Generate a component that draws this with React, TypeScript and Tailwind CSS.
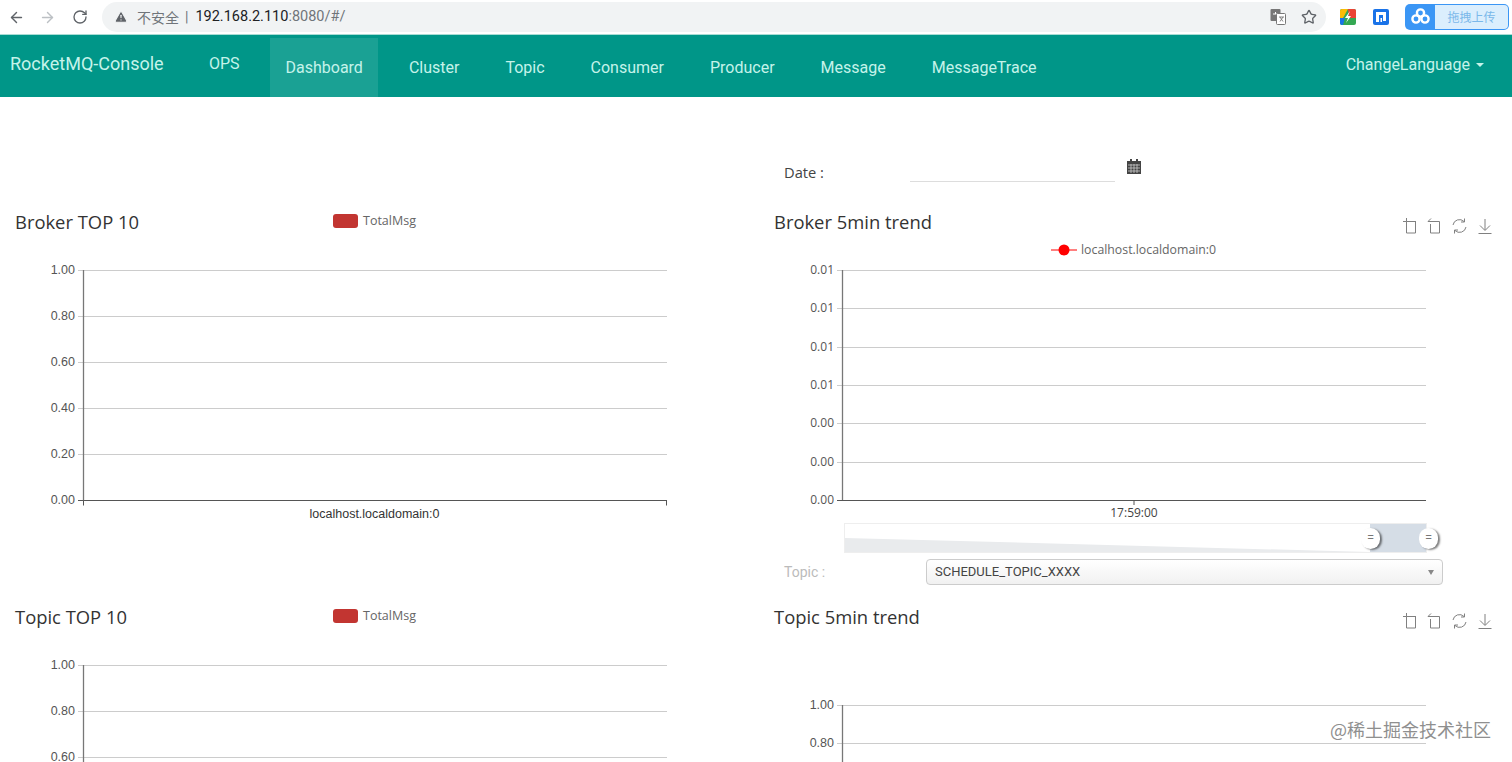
import { ArrowLeft, ArrowRight, RotateCw, Star, TriangleAlert } from "lucide-react";

const navItems = ["Cluster", "Topic", "Consumer", "Producer", "Message", "MessageTrace"];

function ToolIcons() {
  return (
    <svg width="92" height="16" viewBox="0 0 92 16" fill="none" stroke="#808080" strokeWidth="1">
      {/* zoom */}
      <path d="M6.5 0v3.5H16M6.5 3.5v11.5H15.5V3.5M3 3.5h3.5" />
      {/* zoom back */}
      <path d="M31 3.5H28l3-3M28 3.5h11.5v11.5H30.5V6" />
      {/* restore */}
      <path d="M53 7a6.5 6.5 0 0 1 11-3.5M66 9a6.5 6.5 0 0 1-11 3.5M64.5 0.5v3.5h-3.5M54.5 15.5V12h3.5" />
      {/* save */}
      <path d="M85 1v11M80 7.5l5 5 5-5M78.5 15.5h13" />
    </svg>
  );
}

type ChartProps = {
  labels: string[];
  width: number;
  height: number;
  xLabel?: string;
};

// echarts style grid: y axis on the left, one line per label
function Chart({ labels, width, height, xLabel }: ChartProps) {
  const top = 30;
  const step = 46;
  const bottom = top + step * (labels.length - 1) + 0.5;
  const axisX = 83;
  return (
    <svg width={width + 10} height={height} className="block">
      {labels.map((l, i) => {
        const y = top + i * step + 0.5;
        return (
          <g key={i}>
            <line x1={axisX - 5} x2={width} y1={y} y2={y} stroke={i === labels.length - 1 && xLabel ? "#555" : "#ccc"} />
            <text x={axisX - 8} y={y + 3} textAnchor="end" fontSize="12.5" fill="#555" fontFamily="Liberation Sans, sans-serif">
              {l}
            </text>
          </g>
        );
      })}
      <line x1={axisX + 0.5} x2={axisX + 0.5} y1={top} y2={xLabel ? bottom : height} stroke="#777" strokeWidth="1.3" />
      {xLabel && (
        <>
          <line x1={axisX + 0.5} x2={axisX + 0.5} y1={bottom} y2={bottom + 5} stroke="#555" />
          <line x1={width - 0.5} x2={width - 0.5} y1={bottom} y2={bottom + 5} stroke="#555" />
          <text x={374.5} y={bottom + 17} textAnchor="middle" fontSize="12.5" fill="#333" fontFamily="Liberation Sans, sans-serif">
            {xLabel}
          </text>
        </>
      )}
    </svg>
  );
}

function Legend() {
  return (
    <div className="flex items-center gap-[5px] text-[12.5px] leading-[14px] text-[#666] font-['Open_Sans',sans-serif]">
      <span className="w-[25px] h-[14px] rounded-[3px] bg-[#c23531]" />
      TotalMsg
    </div>
  );
}

export default function App() {
  return (
    <div className="w-[1512px] h-[762px] overflow-hidden bg-white font-['Roboto',sans-serif]">
      {/* browser bar */}
      <div className="h-[34px] flex items-center bg-white">
        <div className="w-[102px] pl-[8px] flex items-center gap-[14px]">
          <ArrowLeft size={17} className="text-[#5f6368]" />
          <ArrowRight size={17} className="text-[#bcc0c4]" />
          <RotateCw size={16} className="ml-[2px] text-[#5f6368]" />
        </div>
        <div className="w-[1224px] h-[30px] rounded-full bg-[#f1f3f4] flex items-center pl-[12px] pr-[9px]">
          <TriangleAlert size={14} fill="#5f6368" stroke="#f1f3f4" />
          <span className="ml-[9px] text-[14px] text-[#70757a] font-['Noto_Sans_CJK_SC',sans-serif]">不安全</span>
          <span className="ml-[6px] mr-[7px] text-[14px] text-[#70757a]">|</span>
          <span className="text-[14.5px] text-[#202124]">192.168.2.110</span>
          <span className="text-[14.5px] text-[#70757a]">:8080/#/</span>
          <div className="ml-auto flex items-center gap-[15px]">
            <svg width="16" height="16" viewBox="0 0 16 16">
              <rect x="0.5" y="0" width="10" height="12" rx="1" fill="#777" />
              <path d="M3 5h5M5.5 3v2" stroke="#fff" fill="none" />
              <rect x="6.5" y="4.5" width="9" height="11" rx="1" fill="#fff" stroke="#777" />
              <path d="M9 8h5M10 12.5l3-4.5M10 8l3 4.5" stroke="#777" fill="none" strokeWidth="0.9" />
            </svg>
            <Star size={16} className="text-[#5f6368]" />
          </div>
        </div>
        <div className="ml-[14px] flex items-center">
          <svg width="16" height="16" viewBox="0 0 16 16">
            <rect width="16" height="16" rx="2" fill="#34a853" />
            <path d="M0 2a2 2 0 0 1 2-2h6L3 9H0z" fill="#fbbc05" />
            <path d="M8 0h6a2 2 0 0 1 2 2v7H9z" fill="#ea4335" />
            <path d="M0 9h5l-2 7H2a2 2 0 0 1-2-2z" fill="#1a73e8" />
            <path d="M10 2L5 9h3l-2 5 5-7H8z" fill="#fff" />
          </svg>
          <svg width="16" height="16" viewBox="0 0 16 16" className="ml-[17px]">
            <rect width="16" height="16" rx="2" fill="#1a73e8" />
            <path d="M3 3h10v9h-3V6H6v7H3z" fill="#fff" />
            <rect x="7.5" y="9" width="1.5" height="4" fill="#fff" />
          </svg>
          <div className="ml-[16px] w-[104px] h-[26px] rounded-[5px] bg-[#3b96f5] flex items-center">
            <svg width="30" height="26" viewBox="0 0 30 26" fill="none" stroke="#fff" strokeWidth="2.4">
              <circle cx="11" cy="15" r="3.6" />
              <circle cx="20" cy="15" r="3.6" />
              <circle cx="15.5" cy="9" r="3.6" />
            </svg>
            <div className="flex-1 h-[24px] mr-[1px] rounded-r-[4px] bg-[#dbeefd] text-center text-[12px] leading-[24px] text-[#7ab8ea] font-['Noto_Sans_CJK_SC',sans-serif]">
              拖拽上传
            </div>
          </div>
        </div>
      </div>

      {/* nav */}
      <div className="h-[63px] bg-[#009688] flex text-[16px] text-[#c5f3ea] border-t border-[#a8dcd4]">
        <div className="w-[209px] pl-[10px] pt-[16px] text-[18px] leading-[26px]">RocketMQ-Console</div>
        <div className="w-[61px] pt-[16px] leading-[26px]">OPS</div>
        <div className="flex pt-[3px]">
          <div className="h-[59px] px-[15.5px] mr-[7.5px] flex items-center bg-white/10">Dashboard</div>
          {navItems.map((item) => (
            <div key={item} className="h-[59px] px-[23px] flex items-center">
              {item}
            </div>
          ))}
        </div>
        <div className="ml-auto pr-[28px] pt-[17px] leading-[26px] flex items-start">
          ChangeLanguage
          <span className="ml-[6px] mt-[11px] border-x-[4px] border-t-[4px] border-x-transparent border-t-[#c5f3ea]" />
        </div>
      </div>

      {/* date row */}
      <div className="h-[108px] pl-[784px] pt-[60px] flex items-start text-[14.7px] text-[#444] font-['Open_Sans',sans-serif]">
        <span className="w-[126px] pt-[4px] leading-[22px]">Date :</span>
        <div className="w-[205px] h-[25px] border-b border-[#ddd]" />
        <svg width="14" height="15" viewBox="0 0 14 15" className="ml-[12px] mt-[2px]" fill="#444">
          <rect x="3" y="0" width="2" height="3" />
          <rect x="9" y="0" width="2" height="3" />
          <path d="M0 2h14v13H0z" />
          <path d="M1 6h12M1 9h12M1 12h12M4 5v9M7 5v9M10 5v9" stroke="#ccc" strokeWidth="0.8" />
        </svg>
      </div>

      {/* charts */}
      <div className="grid grid-cols-[774px_738px]">
        <div className="h-[395px]">
          <div className="h-[35px] flex items-start">
            <h3 className="w-[333px] pl-[15px] text-[18.4px] leading-[33px] text-[#333] font-['Open_Sans',sans-serif]">Broker TOP 10</h3>
            <div className="mt-[9px]">
              <Legend />
            </div>
          </div>
          <Chart labels={["1.00", "0.80", "0.60", "0.40", "0.20", "0.00"]} width={667} height={320} xLabel="localhost.localdomain:0" />
        </div>
        <div className="h-[395px]">
          <div className="h-[35px] flex items-start justify-between pr-[20px]">
            <h3 className="text-[18.4px] leading-[33px] text-[#333] font-['Open_Sans',sans-serif]">Broker 5min trend</h3>
            <div className="mt-[13px]">
              <ToolIcons />
            </div>
          </div>
          <div className="relative">
            <svg width="738" height="280" className="block">
              {["0.01", "0.01", "0.01", "0.01", "0.00", "0.00", "0.00"].map((l, i) => {
                const y = Math.round(30 + i * 38.3) + 0.5;
                return (
                  <g key={i}>
                    <line x1={63} x2={652} y1={y} y2={y} stroke={i === 6 ? "#555" : "#ccc"} />
                    <text x={60} y={y + 3} textAnchor="end" fontSize="12" fill="#555" fontFamily="Open Sans, sans-serif">{l}</text>
                  </g>
                );
              })}
              <line x1={68.5} x2={68.5} y1={30} y2={260} stroke="#777" strokeWidth="1.3" />
              <line x1={360} x2={360} y1={260} y2={265} stroke="#555" />
              <text x={360} y={277} textAnchor="middle" fontSize="12" fill="#444" fontFamily="Open Sans, sans-serif">17:59:00</text>
            </svg>
            {/* legend sits on top of the grid */}
            <div className="absolute left-[277px] top-[2px] flex items-center h-[16px] text-[12.3px] text-[#666] gap-[4px] font-['Open_Sans',sans-serif]">
              <svg width="26" height="14" viewBox="0 0 26 14">
                <line x1="0" x2="26" y1="7" y2="7" stroke="#f00" />
                <circle cx="13" cy="7" r="5.5" fill="#f00" />
              </svg>
              localhost.localdomain:0
            </div>
          </div>
          {/* dataZoom */}
          <div className="relative ml-[70px] mt-[3px] w-[583px] h-[30px] border border-[#eee]">
            <svg width="581" height="28" viewBox="0 0 581 28" preserveAspectRatio="none" className="block">
              <path d="M0 14L525 28H0z" fill="#e9ebed" />
              <rect x="525" width="56" height="28" fill="#d5dde6" />
            </svg>
            <span className="absolute left-[516px] top-[4px] w-[19px] h-[21px] rounded-full bg-white shadow-[2px_1px_2px_rgba(0,0,0,0.5)] text-center text-[13px] leading-[20px] text-[#777]">=</span>
            <span className="absolute left-[574px] top-[4px] w-[19px] h-[21px] rounded-full bg-white shadow-[2px_1px_2px_rgba(0,0,0,0.5)] text-center text-[13px] leading-[20px] text-[#777]">=</span>
          </div>
          <div className="flex items-center mt-[6px] pl-[10px]">
            <span className="w-[142px] text-[14px] text-[#bbb]">Topic :</span>
            <div className="w-[517px] h-[26px] rounded-[4px] border border-[#ccc] bg-gradient-to-b from-white to-[#f1f1f1] flex items-center justify-between pl-[8px] pr-[8px] text-[13px] text-[#444]">
              SCHEDULE_TOPIC_XXXX
              <span className="border-x-[3px] border-t-[5px] border-x-transparent border-t-[#888]" />
            </div>
          </div>
        </div>

        <div>
          <div className="h-[35px] flex items-start">
            <h3 className="w-[333px] pl-[15px] text-[18.4px] leading-[33px] text-[#333] font-['Open_Sans',sans-serif]">Topic TOP 10</h3>
            <div className="mt-[9px]">
              <Legend />
            </div>
          </div>
          <Chart labels={["1.00", "0.80", "0.60"]} width={667} height={130} />
        </div>
        <div className="relative">
          <div className="h-[35px] flex items-start justify-between pr-[20px]">
            <h3 className="text-[18.4px] leading-[33px] text-[#333] font-['Open_Sans',sans-serif]">Topic 5min trend</h3>
            <div className="mt-[13px]">
              <ToolIcons />
            </div>
          </div>
          <svg width="738" height="130" className="block">
            {["1.00", "0.80"].map((l, i) => {
              const y = 70.5 + i * 38;
              return (
                <g key={l}>
                  <line x1={63} x2={652} y1={y} y2={y} stroke="#ccc" />
                  <text x={60} y={y + 3} textAnchor="end" fontSize="12.5" fill="#555" fontFamily="Liberation Sans, sans-serif">{l}</text>
                </g>
              );
            })}
            <line x1={68.5} x2={68.5} y1={70} y2={130} stroke="#777" strokeWidth="1.3" />
          </svg>
          <span className="absolute left-[556px] top-[116px] text-[18px] leading-[26px] text-[#8f8f8f] font-['Noto_Sans_CJK_SC',sans-serif]">@稀土掘金技术社区</span>
        </div>
      </div>
    </div>
  );
}
